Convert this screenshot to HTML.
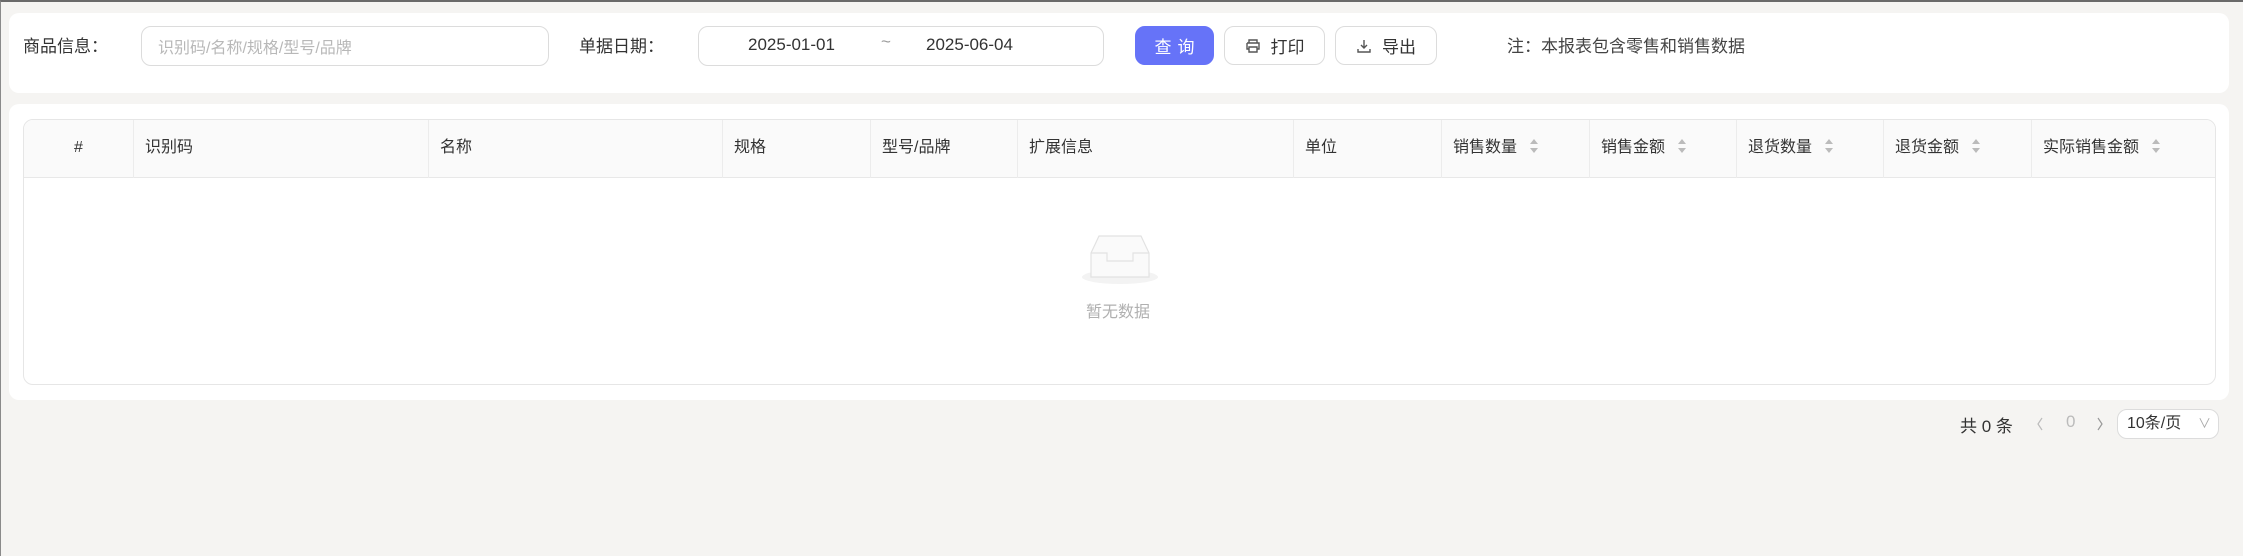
<!DOCTYPE html>
<html><head><meta charset="utf-8"><style>
*{box-sizing:border-box;margin:0;padding:0}
body{width:2243px;height:556px;background:#f5f4f2;font-family:"Liberation Sans","Noto Sans CJK SC",sans-serif;position:relative;overflow:hidden;border-top:2px solid #6a6a6a;border-left:1px solid #8a8a8a;color:#333}
.abs{position:absolute}
.card{position:absolute;background:#fff;border-radius:10px}
.lbl{font-size:17px;color:#333;top:30px}
.inp{border:1px solid #dcdcdc;border-radius:10px;height:40px;top:24px;background:#fff}
.btn{position:absolute;top:24px;height:39px;border-radius:10px;font-size:17px;display:flex;align-items:center;justify-content:center;border:1px solid #dcdcdc;background:#fff;color:#333}
.th{position:absolute;top:0;height:58px;line-height:56px;font-size:16px;color:#333;border-right:1px solid #ececec;padding-left:11px}
.sort{display:inline-block;vertical-align:middle;margin-left:12px;width:10px;height:18px;position:relative;top:-2px}
</style></head><body>
<div class="card" style="left:8px;top:11px;width:2220px;height:80px"></div>
<div class="abs lbl" style="left:22px">商品信息：</div>
<div class="abs inp" style="left:140px;width:408px"><span style="position:absolute;left:16px;top:7px;font-size:16px;color:#b8b8b8">识别码/名称/规格/型号/品牌</span></div>
<div class="abs lbl" style="left:578px">单据日期：</div>
<div class="abs inp" style="left:697px;width:406px;font-size:17px;color:#333"><span style="position:absolute;left:49px;top:8px">2025-01-01</span><span style="position:absolute;left:182px;top:5px;color:#999">~</span><span style="position:absolute;left:227px;top:8px">2025-06-04</span></div>
<div class="btn" style="left:1134px;width:79px;background:#6673f8;border-color:#6673f8;color:#fff;letter-spacing:6px;padding-left:6px">查询</div>
<div class="btn" style="left:1223px;width:101px"><svg width="16" height="16" viewBox="0 0 16 16" style="margin-right:10px" fill="none" stroke="#555" stroke-width="1.4"><path d="M4 5V2h8v3M2 5h12v6h-2M4 11H2V5M4 9h8v5H4z"/></svg>打印</div>
<div class="btn" style="left:1334px;width:102px"><svg width="16" height="16" viewBox="0 0 16 16" style="margin-right:10px" fill="none" stroke="#555" stroke-width="1.4"><path d="M8 2v8M5 7l3 3 3-3M2 11v3h12v-3"/></svg>导出</div>
<div class="abs" style="left:1506px;top:30px;font-size:17px;color:#444">注：本报表包含零售和销售数据</div>

<div class="card" style="left:8px;top:102px;width:2220px;height:296px"></div>
<div class="abs" style="left:22px;top:117px;width:2193px;height:266px;border:1px solid #e6e6e6;border-radius:10px;overflow:hidden;background:#fff">
<div class="abs" style="left:0;top:0;width:100%;height:58px;background:#fafafa;border-bottom:1px solid #e8e8e8"></div>
<div class="th" style="left:0;width:110px;padding:0;text-align:center">#</div>
<div class="th" style="left:110px;width:295px">识别码</div>
<div class="th" style="left:405px;width:294px">名称</div>
<div class="th" style="left:699px;width:148px">规格</div>
<div class="th" style="left:847px;width:147px">型号/品牌</div>
<div class="th" style="left:994px;width:276px">扩展信息</div>
<div class="th" style="left:1270px;width:148px">单位</div>
<div class="th" style="left:1418px;width:148px">销售数量<svg class="sort" viewBox="0 0 10 18"><path d="M5 2L9 7H1z M5 16L1 11H9z" fill="#bbb"/></svg></div>
<div class="th" style="left:1566px;width:147px">销售金额<svg class="sort" viewBox="0 0 10 18"><path d="M5 2L9 7H1z M5 16L1 11H9z" fill="#bbb"/></svg></div>
<div class="th" style="left:1713px;width:147px">退货数量<svg class="sort" viewBox="0 0 10 18"><path d="M5 2L9 7H1z M5 16L1 11H9z" fill="#bbb"/></svg></div>
<div class="th" style="left:1860px;width:148px">退货金额<svg class="sort" viewBox="0 0 10 18"><path d="M5 2L9 7H1z M5 16L1 11H9z" fill="#bbb"/></svg></div>
<div class="th" style="left:2008px;width:185px;border-right:none">实际销售金额<svg class="sort" viewBox="0 0 10 18"><path d="M5 2L9 7H1z M5 16L1 11H9z" fill="#bbb"/></svg></div>
</div>
<svg class="abs" style="left:1078px;top:231px" width="82" height="54" viewBox="0 0 82 54">
<ellipse cx="41" cy="44" rx="38" ry="7" fill="#f3f3f3"/>
<path d="M12 20L20 3H62L70 20V44H12Z" fill="#fafafa" stroke="#e2e2e2" stroke-width="1.2"/>
<path d="M12 20H28V28H54V20H70" fill="none" stroke="#e2e2e2" stroke-width="1.2"/>
</svg>
<div class="abs" style="left:1085px;top:296px;font-size:16px;color:#b0b0b0">暂无数据</div>

<div class="abs" style="left:1959px;top:410px;font-size:17px;color:#333">共 0 条</div>
<svg class="abs" style="left:2034px;top:414px" width="10" height="16" viewBox="0 0 10 16"><path d="M7 2L3 8l4 6" fill="none" stroke="#bbb" stroke-width="1.2"/></svg>
<div class="abs" style="left:2065px;top:410px;font-size:17px;color:#bbb">0</div>
<svg class="abs" style="left:2094px;top:414px" width="10" height="16" viewBox="0 0 10 16"><path d="M3 2l4 6-4 6" fill="none" stroke="#999" stroke-width="1.2"/></svg>
<div class="abs" style="left:2116px;top:407px;width:102px;height:30px;border:1px solid #dcdcdc;border-radius:10px;background:#fff;font-size:16px;line-height:28px;padding-left:9px;color:#333">10条/页<span style="position:absolute;right:7px;top:0;color:#aaa;font-size:13px">∨</span></div>
</body></html>
